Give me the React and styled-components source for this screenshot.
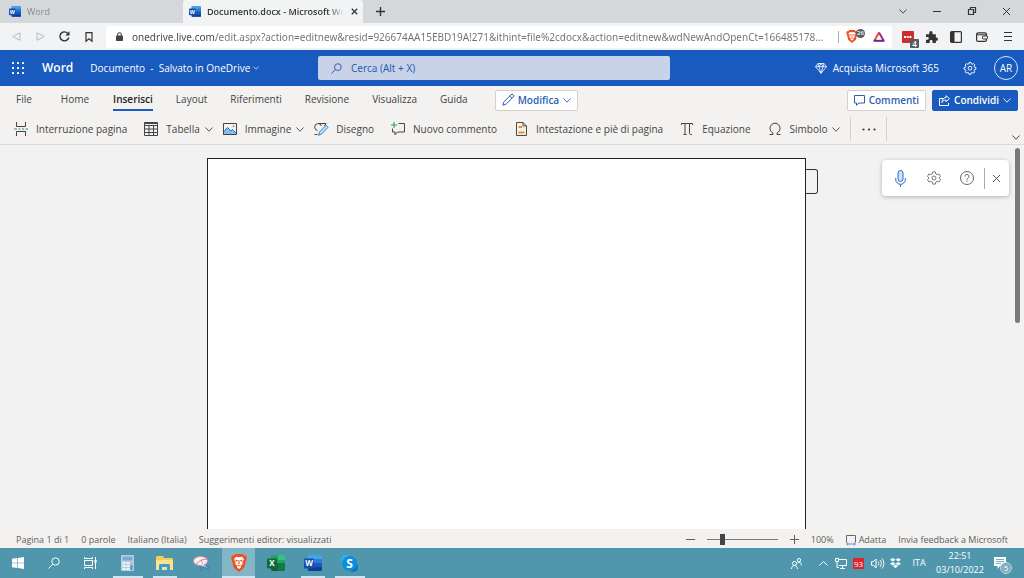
import React from "react";
import styled, { createGlobalStyle, css } from "styled-components";

const GlobalStyle = createGlobalStyle`
  *, *::before, *::after { box-sizing: border-box; }
  html, body { margin: 0; height: 100%; }
  #root { height: 100vh; }
  body { font-family: "Open Sans", "Noto Sans", sans-serif; font-size: 10px; line-height: 14px; color: #444; overflow: hidden; }
  button, input { font: inherit; color: inherit; }
  button { border: 0; padding: 0; background: none; cursor: pointer; white-space: nowrap; }
`;

const Screen = styled.div`
  height: 100%;
  display: flex;
  flex-direction: column;
  background: #f2f2f2;
`;

const Icon = styled.svg`
  display: block;
  flex: none;
  width: ${(p) => p.$w || 14}px;
  height: ${(p) => p.$h || p.$w || 14}px;
  fill: none;
  stroke: currentColor;
  stroke-width: 1;
  overflow: visible;
`;

/* ---------- browser chrome ---------- */
const TabStrip = styled.div`
  display: flex;
  height: 23px;
  flex: none;
  background: #d4d8db;
`;
const BrowserTab = styled.div`
  display: flex;
  align-items: center;
  gap: 6px;
  width: ${(p) => (p.$active ? 180 : 183)}px;
  padding: 0 4px 0 ${(p) => (p.$active ? 6 : 9)}px;
  background: ${(p) => (p.$active ? "#f2f3f4" : "transparent")};
  color: ${(p) => (p.$active ? "#333" : "#888b8e")};
  border-radius: 3px 3px 0 0;
`;
const TabTitle = styled.span`
  flex: 1;
  overflow: hidden;
  white-space: nowrap;
  font-size: 9px;
  font-weight: ${(p) => (p.$active ? 600 : 400)};
  mask-image: linear-gradient(90deg, #000 88%, transparent);
`;
const IconButton = styled.button`
  display: flex;
  align-items: center;
  justify-content: center;
  flex: none;
  width: ${(p) => p.$w || 24}px;
  height: 22px;
  color: ${(p) => p.$color || "#333"};
  position: relative;
`;
const WindowControls = styled.div`
  display: flex;
  margin-left: auto;
`;
const AddressRow = styled.div`
  display: flex;
  align-items: center;
  height: 27px;
  flex: none;
  padding: 0 4px;
  background: #f2f3f4;
`;
const AddressBox = styled.div`
  display: flex;
  align-items: center;
  flex: 1;
  min-width: 0;
  height: 22px;
  margin: 0 4px 0 5px;
  padding-left: 10px;
  background: #fff;
  border-radius: 3px;
`;
const AddressInput = styled.input`
  flex: 1;
  min-width: 0;
  margin-left: 9px;
  padding: 0;
  border: 0;
  outline: 0;
  font-family: "Noto Sans", "Open Sans", sans-serif;
  color: transparent;
  background: linear-gradient(90deg, #444 84px, #707070 84px);
  background-clip: text;
  -webkit-background-clip: text;
`;
const Rule = styled.span`
  flex: none;
  width: 1px;
  height: ${(p) => p.$h || 12}px;
  background: ${(p) => p.$color || "#aaa"};
`;
const Badge = styled.span`
  position: absolute;
  right: ${(p) => (p.$square ? 1 : 0)}px;
  ${(p) => (p.$square ? "bottom: 0;" : "top: 3px;")}
  width: 9px;
  height: 9px;
  border-radius: ${(p) => (p.$square ? 1 : 5)}px;
  background: #555a66;
  color: #fff;
  font-size: ${(p) => (p.$square ? 8 : 6)}px;
  font-weight: 600;
  line-height: 9px;
  text-align: center;
`;

/* ---------- Word header ---------- */
const Header = styled.header`
  display: flex;
  align-items: center;
  height: 36px;
  flex: none;
  padding: 0 6px 0 4px;
  background: #185abd;
  color: #fff;
`;
const AppName = styled.a`
  margin-left: 10px;
  color: #fff;
  text-decoration: none;
  font-size: 12px;
  font-weight: 600;
`;
const DocName = styled.button`
  display: flex;
  align-items: center;
  gap: 3px;
  margin-left: 17px;
`;
const HeaderSide = styled.div`
  display: flex;
  align-items: center;
  flex: 1 1 0;
`;
const HeaderEnd = styled(HeaderSide)`
  justify-content: flex-end;
`;
const SearchBox = styled.label`
  display: flex;
  align-items: center;
  gap: 9px;
  flex: none;
  width: 36%;
  max-width: 352px;
  height: 24px;
  margin-right: 34px;
  padding-left: 13px;
  border-radius: 2px;
  background: #c8d3ea;
  color: #2b579a;
`;
const SearchInput = styled.input`
  flex: 1;
  min-width: 0;
  padding: 0;
  border: 0;
  outline: 0;
  background: none;
  font-family: "Noto Sans", "Open Sans", sans-serif;
  &::placeholder { color: #2b5cb0; opacity: 1; }
`;
const BuyButton = styled.button`
  display: flex;
  align-items: center;
  gap: 6px;
  margin-right: 19px;
`;
const Avatar = styled.button`
  width: 24px;
  height: 24px;
  margin-left: 12px;
  border: 1px solid #dbe5f7;
  border-radius: 50%;
  line-height: 22px;
`;

/* ---------- ribbon ---------- */
const Ribbon = styled.div`
  flex: none;
  background: #f3f2f1;
  border-bottom: 1px solid #dadada;
  box-shadow: 0 1px 2px #0001;
`;
const RibbonTabs = styled.nav`
  display: flex;
  align-items: center;
  height: 28px;
  padding: 0 6px 0 16px;
`;
const RibbonTab = styled.button`
  height: 26px;
  padding-bottom: 2px;
  margin-right: ${(p) => p.$gap || 23}px;
  ${(p) =>
    p.$active &&
    css`
      font-weight: 600;
      color: #222;
      border-bottom: 2px solid #185abd;
      height: 22px;
      padding-bottom: 0;
    `}
`;
const ActionButton = styled.button`
  display: flex;
  align-items: center;
  gap: 4px;
  height: 21px;
  padding: 0 6px;
  border: 1px solid ${(p) => (p.$primary ? "#185abd" : "#d2d0ce")};
  border-radius: 2px;
  background: ${(p) => (p.$primary ? "#185abd" : "#fff")};
  color: ${(p) => (p.$primary ? "#fff" : "#2b5fb8")};
  font-weight: 600;
`;
const ActionGroup = styled.div`
  display: flex;
  gap: 6px;
  margin-left: auto;
`;
const Commands = styled.div`
  display: flex;
  align-items: center;
  height: 30px;
  padding: 0 3px 0 14px;
`;
const Command = styled.button`
  display: flex;
  align-items: center;
  gap: 8px;
  margin-right: ${(p) => (p.$menu ? 10 : 17)}px;
`;
const CommandLabel = styled.span`
  display: flex;
  align-items: center;
  gap: 5px;
`;
const Collapse = styled(IconButton)`
  align-self: flex-end;
  width: 10px;
  height: 14px;
  margin-left: auto;
`;

/* ---------- document area ---------- */
const Workspace = styled.main`
  position: relative;
  display: flex;
  flex: 1;
  min-height: 0;
  background: #f2f2f2;
`;
const Canvas = styled.div`
  display: flex;
  justify-content: center;
  flex: 1;
  padding-top: 13px;
`;
const Page = styled.article`
  position: relative;
  width: 60%;
  max-width: 599px;
  background: #fff;
  border: 1px solid #222;
  border-bottom: 0;
`;
const PageHandle = styled.button`
  position: absolute;
  left: 100%;
  top: 10px;
  width: 13px;
  height: 25px;
  border: 1px solid #333;
  border-left: 0;
  border-radius: 0 3px 3px 0;
`;
const ScrollTrack = styled.div`
  width: 11px;
  padding: 3px 4px 0 2px;
`;
const ScrollThumb = styled.div`
  height: 46%;
  border-radius: 3px;
  background: #7a7a7a;
`;
const DictatePanel = styled.div`
  position: absolute;
  top: 15px;
  right: 15px;
  display: flex;
  align-items: center;
  height: 36px;
  padding: 0 1px 0 2px;
  border-radius: 4px;
  background: #fff;
  box-shadow: 0 1px 4px #0004;
`;

/* ---------- status bar ---------- */
const StatusBar = styled.footer`
  display: flex;
  align-items: center;
  flex: none;
  height: 19px;
  padding: 2px 16px 0;
  gap: 12px;
  background: #f3f2f1;
  color: #605e5c;
  font-size: 9px;
  white-space: nowrap;
`;
const StatusEnd = styled.div`
  display: flex;
  align-items: center;
  gap: 12px;
  margin-left: auto;
`;
const ZoomRange = styled.input`
  appearance: none;
  width: 71px;
  height: 12px;
  margin: 0;
  background: linear-gradient(#777, #777) center / 100% 1px no-repeat;
  &::-webkit-slider-thumb {
    appearance: none;
    width: 5px;
    height: 11px;
    background: #444;
  }
`;
const StatusButton = styled.button`
  display: flex;
  align-items: center;
  gap: 3px;
`;

/* ---------- taskbar ---------- */
const Taskbar = styled.div`
  display: flex;
  flex: none;
  height: 30px;
  background: #5097ae;
  color: #fff;
`;
const SystemButtons = styled.div`
  display: flex;
  margin-right: 1px;
`;
const TaskButton = styled.button`
  display: flex;
  align-items: center;
  justify-content: center;
  width: ${(p) => (p.$system ? 36 : 37)}px;
  height: 30px;
  background: ${(p) => (p.$active ? "linear-gradient(#83b5c5, #83b5c5) center / 33px 100% no-repeat" : "none")};
  position: relative;
  &::after {
    content: "";
    position: absolute;
    bottom: 0;
    width: ${(p) => p.$line || 0}px;
    height: 2px;
    background: #cfe6f2;
  }
`;
const Tray = styled.div`
  display: flex;
  align-items: center;
  margin-left: auto;
  padding-right: 12px;
  font-size: 9px;
`;
const TrayButton = styled.button`
  display: flex;
  justify-content: center;
  align-items: center;
  width: 18px;
  height: 30px;
  margin-right: ${(p) => p.$gap || 0}px;
`;
const TrayCount = styled.button`
  width: 11px;
  height: 11px;
  margin: 0 4px 0 3px;
  background: #d9252e;
  font-size: 8px;
  line-height: 11px;
`;
const TrayText = styled.button`
  width: 26px;
`;
const Clock = styled.button`
  width: 56px;
  line-height: 14px;
  text-align: center;
`;
const Notice = styled(IconButton)`
  width: 18px;
  height: 24px;
  margin-left: 6px;
  justify-content: flex-start;
  color: #fff;
`;
const NoticeCount = styled.span`
  position: absolute;
  right: 0;
  bottom: 1px;
  width: 12px;
  height: 12px;
  border: 1px solid #b9d4de;
  border-radius: 50%;
  background: #80aebf;
  font-size: 8px;
  line-height: 10px;
`;

/* ---------- drawings ---------- */
const Chevron = ({ w = 8 }) => (
  <Icon $w={w} $h={w > 6 ? 5 : 4} viewBox="0 0 8 5"><path d="M.5.500 4 4.200 7.500.5" strokeWidth=".9" /></Icon>
);
const Cross = ({ w = 9, s = 1 }) => (
  <Icon $w={w} viewBox="0 0 9 9"><path d="M1 1l7 7M8 1 1 8" strokeWidth={s} /></Icon>
);
const Magnifier = ({ w = 11 }) => (
  <Icon $w={w} viewBox="0 0 12 12"><circle cx="7.500" cy="4.500" r="3.700" /><path d="M4.800 7.200.5 11.500" /></Icon>
);
const Letter = styled.text`
  fill: #fff;
  stroke: none;
  font-weight: 700;
  font-size: ${(p) => p.$s || 8}px;
  text-anchor: middle;
`;
const WordLogo = ({ w = 12 }) => (
  <Icon $w={w} $h={w > 12 ? 16 : 11} viewBox="0 0 18 16">
    <g stroke="none">
      <rect x="4" y="0" width="14" height="16" rx="1" fill="#2b7cd3" />
      <path d="M4 0h13l1 1v3H4z" fill="#41a5ee" />
      <path d="M4 8h14v4H4z" fill="#185abd" />
      <path d="M4 12h14v3l-1 1H5l-1-1z" fill="#103f91" />
      <rect y="3.500" width="10" height="10" rx="1" fill="#174fae" />
    </g>
    <Letter x="5" y="11.400">W</Letter>
  </Icon>
);
const ExcelLogo = () => (
  <Icon $w={18} $h={16} viewBox="0 0 18 16">
    <g stroke="none">
      <rect x="4" width="14" height="16" rx="1" fill="#21a366" />
      <path d="M11 0h6l1 1v4h-7z" fill="#33c481" />
      <path d="M4 8h7v8H5l-1-1z" fill="#185c37" />
      <path d="M11 8h7v7l-1 1h-6z" fill="#107c41" />
      <rect y="3.500" width="10" height="10" rx="1" fill="#0f6b3a" />
    </g>
    <Letter x="5" y="11.400">X</Letter>
  </Icon>
);
const BraveLogo = ({ w = 16 }) => (
  <Icon $w={w} $h={Math.round(w * 1.12)} viewBox="0 0 16 18">
    <g stroke="none">
      <path d="M4.300 0h7.400l1.500 1.600 1.700-.2 1 2.500-.6 1.500-1.800 7.400c-.3 1-1 1.600-1.800 2.200L8 18l-3.700-3c-.8-.6-1.500-1.200-1.800-2.200L.7 5.400.1 3.900l1-2.500 1.700.2z" fill="#f0501f" />
      <path d="M8 3.200 11 2.700l2 2.600-1.700 3 .5 1.800-2.300 1.600.6 1.600L8 15l-2.100-1.700.6-1.600-2.300-1.600.5-1.800L3 5.300l2-2.600z" fill="#fff" />
      <path d="M4.400 5.500 7 6.300l-.8 1.200-1.400-.3zM11.600 5.500 9 6.300l.8 1.200 1.400-.3zM7.600 6h.8l.3 3.600L8 10.200l-.7-.6zM6 10.200l2 1 2-1-2 2.200z" fill="#f0501f" />
    </g>
  </Icon>
);
const Gear = ({ w = 13 }) => (
  <Icon $w={w} viewBox="0 0 16 16">
    <path d="M6.800.5h2.400l.5 2 1.200.6 1.900-1 1.600 1.700-1 1.900.5 1.100 2 .6v2.200l-2 .6-.5 1.100 1 1.900-1.600 1.700-1.900-1-1.200.6-.5 2H6.800l-.5-2-1.200-.6-1.900 1-1.600-1.700 1-1.900-.5-1.100-2-.6V7.400l2-.6.500-1.100-1-1.900 1.600-1.700 1.900 1 1.200-.6z" strokeWidth="1.300" />
    <circle cx="8" cy="8.300" r="2.500" strokeWidth="1.300" />
  </Icon>
);
const SettingsCog = () => (
  <Icon viewBox="0 0 16 16">
    <path d="M6.500 1h3l.5 2.300 1.600.9 2.200-.8 1.600 2.700L13.700 8l1.700 1.900-1.600 2.700-2.200-.8-1.600.9L9.500 15h-3L6 12.700l-1.600-.9-2.200.8L.6 9.900 2.300 8 .6 6.100l1.600-2.700 2.200.8L6 3.300z" />
    <circle cx="8" cy="8" r="2.300" />
  </Icon>
);

const ribbonTabs = [
  { label: "File", gap: 29 },
  { label: "Home", gap: 24 },
  { label: "Inserisci", active: true },
  { label: "Layout" },
  { label: "Riferimenti" },
  { label: "Revisione" },
  { label: "Visualizza" },
  { label: "Guida", gap: 27 },
];

const commands = [
  {
    label: "Interruzione pagina",
    icon: (
      <Icon viewBox="0 0 14 14"><path d="M2.500 0v4.500h9V0M2.500 14V9.500h9V14" /><path d="M0 7h3M4.500 7h2M8 7h2M11.500 7H14" stroke="#2a8a8a" /></Icon>
    ),
  },
  {
    label: "Tabella",
    menu: true,
    icon: (
      <Icon viewBox="0 0 14 14"><path d="M.5.500h13v13H.5zM.5 1.500h13M.5 3.500h13M.5 7h13M.5 10.500h13M5 3v10.500M9.500 3v10.500" /></Icon>
    ),
  },
  {
    label: "Immagine",
    menu: true,
    icon: (
      <Icon $w={14} $h={12} viewBox="0 0 14 12"><path d="M.5 9 4.500 4.500 8 8l1.500-1.500 4 4v1H.5z" fill="#83beec" stroke="#1e78c8" /><path d="M.5.500h13v11H.5z" /><circle cx="10.500" cy="3.200" r="1" fill="#e8883a" stroke="none" /></Icon>
    ),
  },
  {
    label: "Disegno",
    icon: (
      <Icon viewBox="0 0 14 14"><path d="M3.500 8.500A3.500 3.500 0 1 1 7.500 4M4.500 1.500H12L10.500 4M.5 12.500h3" /><path d="M4.500 13.300l1-3.300L12 3.300l2 2L7.500 12z" fill="#bfe0f7" stroke="#2a86cf" /></Icon>
    ),
  },
  {
    label: "Nuovo commento",
    icon: (
      <Icon viewBox="0 0 14 14"><path d="M7.500 1.500h6V10H6.500L4 12.800V10H1.500V6.500" /><path d="M3 0v6M0 3h6" stroke="#2f9a4a" /></Icon>
    ),
  },
  {
    label: "Intestazione e piè di pagina",
    icon: (
      <Icon viewBox="0 0 14 14"><path d="M2.500.500H9L12.500 4v9.500h-10zM9 .5V4h3.500" stroke="#5a4632" /><path d="M4.500 5H8M4.500 10.500h6" stroke="#e0923a" strokeWidth="2" /></Icon>
    ),
  },
  {
    label: "Equazione",
    icon: (
      <Icon viewBox="0 0 14 14"><path d="M1.500 3V1.500h11V3M5 1.500v11M3.500 12.500h3M9.500 1.500v9.500c0 1 .6 1.500 1.500 1.500h1" /></Icon>
    ),
  },
  {
    label: "Simbolo",
    menu: true,
    icon: (
      <Icon viewBox="0 0 14 14"><path d="M1.500 12.500H5v-1.500C3 10 2 8.200 2 6.200a5 5 0 0 1 10 0c0 2-1 3.800-3 4.800v1.500h3.500" /></Icon>
    ),
  },
];

const url =
  "onedrive.live.com/edit.aspx?action=editnew&resid=926674AA15EBD19A!271&ithint=file%2cdocx&action=editnew&wdNewAndOpenCt=166485178...";

const taskItems = [
  {
    name: "Calcolatrice",
    line: 30,
    icon: (
      <Icon $w={13} $h={16} viewBox="0 0 13 16"><g stroke="none"><rect width="13" height="16" rx="1" fill="#b5cfe4" /><path d="M1.500 1.500h10v4h-10z" fill="#7fa8d0" /><path d="M1.500 7h3v2h-3zM5.500 7h3v2h-3zM1.500 10h3v2h-3zM5.500 10h3v2h-3zM1.500 13h3v2h-3zM5.500 13h3v2h-3z" fill="#edf5fb" /><path d="M9.500 7h2v2h-2z" fill="#e3a989" /><path d="M9.500 10h2v5h-2z" fill="#5688bd" /></g></Icon>
    ),
  },
  {
    name: "Esplora file",
    line: 24,
    icon: (
      <Icon $w={17} $h={15} viewBox="0 0 17 15"><g stroke="none"><path d="M0 1 1 0h6l1 2h8l1 1v11H0z" fill="#f3cf57" /><path d="M0 4h17v10H0z" fill="#fbe38b" /><path d="M3 15V9l1-1h9l1 1v6h-3v-4H6v4z" fill="#3f9bd8" /></g></Icon>
    ),
  },
  {
    name: "Strumento di cattura",
    icon: (
      <Icon $w={17} $h={15} viewBox="0 0 17 15"><ellipse cx="7.500" cy="5" rx="7" ry="4.500" fill="#f6eef1" stroke="#d98d9b" /><path d="M8 4 3 8M8 4l6-1M8 4l2 4" stroke="#c76e80" strokeWidth=".8" /><path d="M14 4 8.500 11M9 8l5 3.500" stroke="#dce9f5" /><circle cx="8.500" cy="12.500" r="1.600" stroke="#3f72c4" /><circle cx="14.500" cy="11.500" r="1.600" stroke="#3f72c4" /></Icon>
    ),
  },
  { name: "Brave", line: 33, active: true, icon: <BraveLogo /> },
  { name: "Excel", icon: <ExcelLogo /> },
  { name: "Word", line: 24, icon: <WordLogo w={18} /> },
  {
    name: "Skype",
    line: 30,
    icon: (
      <Icon $w={17} viewBox="0 0 17 17"><g stroke="none" fill="#0a8fe0"><circle cx="5" cy="5" r="5" fill="#29b6f6" /><circle cx="12" cy="12" r="5" fill="#0b6fc9" /><circle cx="8.500" cy="8.500" r="7.500" /></g><Letter x="8.500" y="12.700" $s={12}>S</Letter></Icon>
    ),
  },
];

function Browser() {
  return (
    <>
      <TabStrip>
        <BrowserTab>
          <WordLogo />
          <TabTitle>Word</TabTitle>
        </BrowserTab>
        <BrowserTab $active>
          <WordLogo />
          <TabTitle $active>Documento.docx - Microsoft Wor</TabTitle>
          <IconButton $w={9} aria-label="Chiudi scheda"><Cross w={7} s={1.6} /></IconButton>
        </BrowserTab>
        <IconButton $w={34} aria-label="Nuova scheda">
          <Icon $w={9} viewBox="0 0 9 9"><path d="M4.500 0v9M0 4.500h9" strokeWidth="1.400" /></Icon>
        </IconButton>
        <WindowControls>
          <IconButton $w={35} aria-label="Cerca schede"><Chevron /></IconButton>
          <IconButton $w={34} aria-label="Riduci"><Icon $w={8} viewBox="0 0 8 8"><path d="M0 4.500h8" /></Icon></IconButton>
          <IconButton $w={35} aria-label="Ripristina">
            <Icon $w={8} viewBox="0 0 8 8"><path d="M.5 2.500h5v5h-5zM2.500 2.500v-2h5v5h-2" strokeWidth="1.200" /></Icon>
          </IconButton>
          <IconButton $w={35} aria-label="Chiudi"><Cross /></IconButton>
        </WindowControls>
      </TabStrip>
      <AddressRow>
        <IconButton aria-label="Indietro" $color="#b8babc"><Icon $w={9} viewBox="0 0 9 9"><path d="M8 .7v7.600L.8 4.500z" /></Icon></IconButton>
        <IconButton aria-label="Avanti" $color="#b8babc"><Icon $w={9} viewBox="0 0 9 9"><path d="M1 .7v7.600l7.200-3.800z" /></Icon></IconButton>
        <IconButton aria-label="Ricarica">
          <Icon $w={11} viewBox="0 0 11 11"><path d="M9.800 6.500A4.500 4.500 0 1 1 8.700 2.300" strokeWidth="1.400" /><path d="M10.500.3v4.200H6.300z" fill="currentColor" stroke="none" /></Icon>
        </IconButton>
        <IconButton $w={25} aria-label="Segnalibro"><Icon $w={8} $h={10} viewBox="0 0 8 10"><path d="M1 .7h6v8.500L4 6.800 1 9.200z" strokeWidth="1.200" /></Icon></IconButton>
        <AddressBox>
          <Icon $w={7} $h={9} viewBox="0 0 7 9"><path d="M1.700 4V2.500a1.800 1.800 0 0 1 3.600 0V4" strokeWidth="1.100" /><rect y="3.500" width="7" height="5.500" rx=".7" fill="#444" stroke="none" /></Icon>
          <AddressInput aria-label="Indirizzo" defaultValue={url} />
          <Rule />
          <IconButton $w={26} aria-label="Brave Shields"><BraveLogo w={12} /><Badge>26</Badge></IconButton>
          <IconButton $w={27} aria-label="Brave Rewards">
            <Icon $w={12} $h={11} viewBox="0 0 12 11"><path d="M6 1.500 1.500 9.500" stroke="#f0501f" strokeWidth="2" /><path d="M6 1.500 10.500 9.500" stroke="#a0307c" strokeWidth="2" /><path d="M.5 9.800h11" stroke="#5a2d9c" strokeWidth="2" /></Icon>
          </IconButton>
        </AddressBox>
        <IconButton aria-label="Estensione">
          <Icon $w={12} viewBox="0 0 12 12"><rect width="12" height="12" rx="1" fill="#d32a2a" stroke="none" /><path d="M2 6h8" stroke="#fff" strokeWidth="2" strokeDasharray="2 .7" /></Icon>
          <Badge $square>4</Badge>
        </IconButton>
        <IconButton aria-label="Estensioni">
          <Icon $w={12} viewBox="0 0 11 11"><path d="M0 3h3V1.500a1.500 1.500 0 0 1 3 0V3h3v3h.5a1.500 1.500 0 0 1 0 3H9v2H6V9.500a1.300 1.300 0 0 0-2.600 0V11H0V8h1.300a1.300 1.300 0 0 0 0-2.600H0z" fill="#333" stroke="none" /></Icon>
        </IconButton>
        <IconButton aria-label="Barra laterale"><Icon $w={12} viewBox="0 0 12 12"><rect x=".6" y=".6" width="10.800" height="10.800" rx="1" strokeWidth="1.200" /><path d="M1 1h3.500v10H1z" fill="#333" stroke="none" /></Icon></IconButton>
        <IconButton $w={27} aria-label="Portafoglio"><Icon $w={12} $h={10} viewBox="0 0 12 10"><rect x=".6" y=".8" width="9.900" height="8.600" rx="1.500" strokeWidth="1.200" /><path d="M1 2.800h9.500" /><rect x="6.500" y="4" width="5" height="3" rx="1" fill="#f2f3f4" /></Icon></IconButton>
        <IconButton $w={25} aria-label="Menu"><Icon $w={8} $h={9} viewBox="0 0 8 9"><path d="M0 .5h8M0 4.500h8M0 8.500h8" /></Icon></IconButton>
      </AddressRow>
    </>
  );
}

function WordHeader() {
  return (
    <Header>
      <HeaderSide>
        <IconButton $w={28} $color="#fff" aria-label="App">
          <Icon $w={12} viewBox="0 0 12 12">
            <g fill="currentColor" stroke="none">
              {[0, 5, 10].flatMap((x) => [0, 5, 10].map((y) => <rect key={`${x}-${y}`} x={x} y={y} width="2" height="2" rx=".6" />))}
            </g>
          </Icon>
        </IconButton>
        <AppName href="#word">Word</AppName>
        <DocName>Documento&nbsp; -&nbsp; Salvato in OneDrive <Chevron w={6} /></DocName>
      </HeaderSide>
      <SearchBox>
        <Magnifier />
        <SearchInput aria-label="Cerca" placeholder="Cerca (Alt + X)" />
      </SearchBox>
      <HeaderEnd>
        <BuyButton>
          <Icon $w={12} $h={11} viewBox="0 0 12 11"><path d="M3 .5h6l2.500 3.200L6 10.300.5 3.700zM.5 3.700h11M3 .5l1 3.200 2 6.600 2-6.600 1-3.200M4 3.700l2-3.200 2 3.200" strokeWidth=".8" /></Icon>
          Acquista Microsoft 365
        </BuyButton>
        <IconButton $color="#fff" aria-label="Impostazioni"><Gear w={12} /></IconButton>
        <Avatar>AR</Avatar>
      </HeaderEnd>
    </Header>
  );
}

function WordRibbon() {
  return (
    <Ribbon>
      <RibbonTabs>
        {ribbonTabs.map((t) => (
          <RibbonTab key={t.label} $active={t.active} $gap={t.gap}>{t.label}</RibbonTab>
        ))}
        <ActionButton>
          <Icon $w={12} viewBox="0 0 12 12"><path d="M.8 11.200 1.700 8 9 .8a1.500 1.500 0 0 1 2.200 2.200L4 10.300zM7.800 2l2.200 2.200" /></Icon>
          Modifica
          <Chevron />
        </ActionButton>
        <ActionGroup>
          <ActionButton>
            <Icon $w={11} viewBox="0 0 11 11"><path d="M.5.500h10v7.500H5L2.500 10.300V8h-2z" /></Icon>
            Commenti
          </ActionButton>
          <ActionButton $primary>
            <Icon $w={11} viewBox="0 0 11 11"><path d="M4 3.500H.5v7h9V8M7 .7l3.500 3L7 6.700V5C5 5 3.700 5.800 3 7.500 3 4.500 4.500 2.700 7 2.500z" /></Icon>
            Condividi
            <Chevron />
          </ActionButton>
        </ActionGroup>
      </RibbonTabs>
      <Commands>
        {commands.map((c) => (
          <Command key={c.label} $menu={c.menu}>
            {c.icon}
            <CommandLabel>{c.label}{c.menu && <Chevron />}</CommandLabel>
          </Command>
        ))}
        <Rule $h={24} $color="#d2d0ce" />
        <IconButton $w={35} aria-label="Altro"><Icon $w={14} $h={3} viewBox="0 0 14 3"><g fill="currentColor" stroke="none"><circle cx="1.500" cy="1.500" r="1.100" /><circle cx="7" cy="1.500" r="1.100" /><circle cx="12.500" cy="1.500" r="1.100" /></g></Icon></IconButton>
        <Rule $h={24} $color="#d2d0ce" />
        <Collapse aria-label="Comprimi"><Chevron /></Collapse>
      </Commands>
    </Ribbon>
  );
}

function DocumentArea() {
  return (
    <Workspace>
      <Canvas>
        <Page><PageHandle aria-label="Commenti a margine" /></Page>
      </Canvas>
      <ScrollTrack><ScrollThumb /></ScrollTrack>
      <DictatePanel>
        <IconButton $w={33} $color="#2b6cc4" aria-label="Dettatura">
          <Icon $w={11} $h={17} viewBox="0 0 11 17"><rect x="3" y=".5" width="5" height="11" rx="2.500" fill="#cfe2f5" /><path d="M.7 8v1.500a4.800 4.800 0 0 0 9.600 0V8M5.500 14.300V17" /></Icon>
        </IconButton>
        <IconButton $w={33} $color="#666" aria-label="Impostazioni dettatura"><SettingsCog /></IconButton>
        <IconButton $w={34} $color="#666" aria-label="Guida dettatura">
          <Icon viewBox="0 0 14 14"><circle cx="7" cy="7" r="6.500" /><path d="M5 5.500a2 2 0 1 1 3 1.700c-.7.4-1 .7-1 1.500M7 9.700v1.200" /></Icon>
        </IconButton>
        <Rule $h={21} $color="#aaa" />
        <IconButton $w={23} $color="#555" aria-label="Chiudi dettatura"><Cross /></IconButton>
      </DictatePanel>
    </Workspace>
  );
}

function Status() {
  return (
    <StatusBar>
      <span>Pagina 1 di 1</span>
      <span>0 parole</span>
      <span>Italiano (Italia)</span>
      <span>Suggerimenti editor: visualizzati</span>
      <StatusEnd>
        <StatusButton aria-label="Riduci zoom"><Icon $w={9} viewBox="0 0 9 9"><path d="M0 4.500h9" /></Icon></StatusButton>
        <ZoomRange type="range" min="0" max="100" defaultValue="20" aria-label="Zoom" />
        <StatusButton aria-label="Aumenta zoom"><Icon $w={9} viewBox="0 0 9 9"><path d="M0 4.500h9M4.500 0v9" /></Icon></StatusButton>
        <StatusButton>100%</StatusButton>
        <StatusButton>
          <Icon $w={10} viewBox="0 0 10 10"><path d="M.5 7.500V.500h9V7.500" stroke="#666" /><path d="M1 9h8M2.200 7.500.5 9l1.700 1.500M7.800 7.500 9.500 9l-1.700 1.500" stroke="#2b7cd3" strokeWidth=".8" /></Icon>
          Adatta
        </StatusButton>
        <StatusButton>Invia feedback a Microsoft</StatusButton>
      </StatusEnd>
    </StatusBar>
  );
}

function WindowsTaskbar() {
  return (
    <Taskbar>
      <SystemButtons>
        <TaskButton $system aria-label="Start"><Icon $w={12} viewBox="0 0 12 12"><path d="M0 1.700 5.400 1v4.700H0zM6 .9 12 0v5.700H6zM0 6.300h5.400V11L0 10.300zM6 6.300h6V12l-6-.9z" fill="#fff" stroke="none" /></Icon></TaskButton>
        <TaskButton $system aria-label="Cerca"><Magnifier w={12} /></TaskButton>
        <TaskButton $system aria-label="Visualizzazione attività">
          <Icon $w={13} $h={12} viewBox="0 0 13 12"><path d="M.5 0v1.500h8V0M.5 12v-1.500h8V12M.5 3.500h8v5h-8zM11.500 0v12" /><path d="M10.300 3h2.400v2.500h-2.400z" fill="#fff" stroke="none" /></Icon>
        </TaskButton>
      </SystemButtons>
      {taskItems.map((t) => (
        <TaskButton key={t.name} $line={t.line} $active={t.active} aria-label={t.name}>{t.icon}</TaskButton>
      ))}
      <Tray>
        <TrayButton $gap={9} aria-label="Contatti">
          <Icon $w={11} viewBox="0 0 11 11"><circle cx="3.500" cy="5.500" r="2" /><path d="M.5 11c0-4.500 6-4.500 6 0" /><circle cx="8" cy="2.200" r="1.700" /><path d="M6.500 5c2-1.500 4 0 4 2.500" /></Icon>
        </TrayButton>
        <TrayButton aria-label="Icone nascoste"><Icon $w={9} $h={5} viewBox="0 0 9 5"><path d="M.5 4.500 4.500.500l4 4" /></Icon></TrayButton>
        <TrayButton aria-label="Rete"><Icon $w={12} $h={11} viewBox="0 0 12 11"><path d="M3.500 1.500h8v6h-8M7.500 7.500V10M5 10.500h5M.5.500h3v3h-3zM2 3.500v6h2" /></Icon></TrayButton>
        <TrayCount>93</TrayCount>
        <TrayButton aria-label="Volume"><Icon $w={13} $h={11} viewBox="0 0 13 11"><path d="M.5 3.700h2L5 1v9L2.500 7.300h-2zM7 3.500c1 1.200 1 2.800 0 4M9 2c1.800 2 1.800 5 0 7M11 .5c2.500 3 2.500 7 0 10" /></Icon></TrayButton>
        <TrayButton $gap={2} aria-label="Dropbox"><Icon $w={11} $h={10} viewBox="0 0 11 10"><path d="M2.800 0 5.500 1.800 2.800 3.600 0 1.800zM8.200 0 11 1.800 8.200 3.600 5.500 1.800zM2.800 3.900 5.500 5.700 2.800 7.500 0 5.700zM8.200 3.900 11 5.700 8.200 7.500 5.500 5.700zM5.500 6.500 8 8.200 5.500 10 3 8.200z" fill="#fff" stroke="none" /></Icon></TrayButton>
        <TrayText>ITA</TrayText>
        <Clock>22:51<br />03/10/2022</Clock>
        <Notice aria-label="Notifiche">
          <Icon $w={12} viewBox="0 0 12 12"><path d="M0 0h12v9H6l-2.500 3V9H0z" fill="#fff" stroke="none" /><path d="M2 2.500h8M2 4.500h8M2 6.500h5" stroke="#5097ae" strokeWidth=".8" /></Icon>
          <NoticeCount>5</NoticeCount>
        </Notice>
      </Tray>
    </Taskbar>
  );
}

export default function App() {
  return (
    <Screen>
      <GlobalStyle />
      <Browser />
      <WordHeader />
      <WordRibbon />
      <DocumentArea />
      <Status />
      <WindowsTaskbar />
    </Screen>
  );
}
